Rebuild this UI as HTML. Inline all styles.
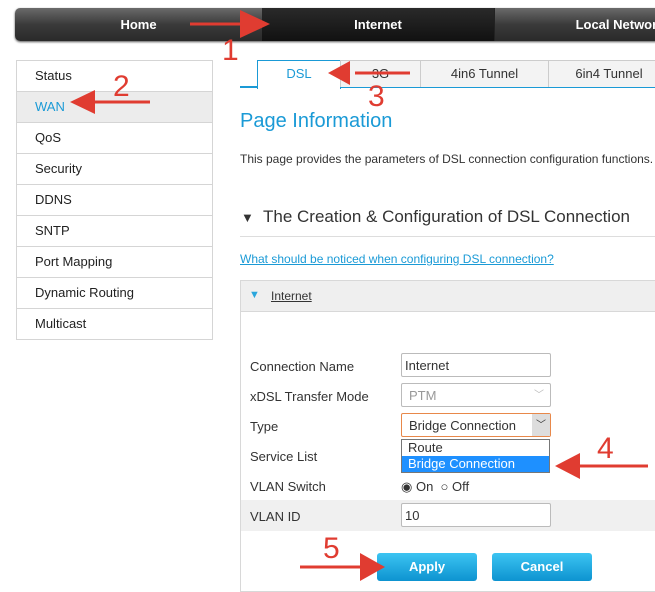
<!DOCTYPE html><html><head><style>
body{margin:0;width:655px;height:585px;overflow:hidden;background:#fff;font-family:"Liberation Sans",sans-serif;font-size:13px;color:#333;position:relative}
.a{position:absolute}
.nav{left:15px;top:8px;width:700px;height:33px;border-radius:5px;background:linear-gradient(#6a6a6a,#3a3a3a 50%,#2a2a2a);box-shadow:0 1px 2px #555;overflow:hidden}
.nav div{position:absolute;top:0;height:33px;line-height:33px;color:#fff;font-weight:bold;text-align:center;font-size:13px}
.side{left:16px;top:60px;width:195px;border:1px solid #d5d5d5}
.side div{height:30px;line-height:30px;padding-left:18px;border-bottom:1px solid #d5d5d5;font-size:13px;color:#222}
.side div:last-child{border-bottom:none}
.tab{top:60px;height:26px;line-height:26px;text-align:center;border:1px solid #ccc;background:#f3f3f3;font-size:13px;border-bottom:none}
.lbl{left:250px;font-size:13px;color:#333}
.inp{left:401px;height:24px;border:1px solid #bbb;border-radius:2px;line-height:24px;padding-left:3px;box-sizing:border-box;width:150px;background:#fff}
.btn{top:553px;width:100px;height:28px;line-height:28px;color:#fff;text-align:center;font-weight:bold;border-radius:3px;background:linear-gradient(#3cc4f2,#0d93d0)}
</style></head><body>
<div class="a nav">
<div style="left:0;width:247px">Home</div>
<div style="left:247px;width:232px;background:linear-gradient(#2a2a2a,#111);">Internet</div>
<div style="left:479px;width:250px;border-left:1px solid #222">Local Network</div>
</div>
<div class="a side">
<div>Status</div><div style="background:#ececec;color:#1a9ad6">WAN</div><div>QoS</div><div>Security</div><div>DDNS</div><div>SNTP</div><div>Port Mapping</div><div>Dynamic Routing</div><div>Multicast</div>
</div>
<div class="a" style="left:240px;top:86px;width:420px;height:2px;background:#1a9ad6"></div>
<div class="a tab" style="left:257px;width:82px;background:#fff;border-color:#1a9ad6;height:28px;color:#1a9ad6">DSL</div>
<div class="a tab" style="left:340px;width:79px">3G</div>
<div class="a tab" style="left:420px;width:127px">4in6 Tunnel</div>
<div class="a tab" style="left:548px;width:120px">6in4 Tunnel</div>
<div class="a" style="left:240px;top:110px;font-size:20px;color:#1a9ad6">Page Information</div>
<div class="a" style="left:240px;top:152px;font-size:12px;white-space:nowrap">This page provides the parameters of DSL connection configuration functions.</div>
<div class="a" style="left:241px;top:207px;font-size:17px;color:#333;white-space:nowrap"><span style="font-size:13px">▼</span>&nbsp; The Creation &amp; Configuration of DSL Connection</div>
<div class="a" style="left:240px;top:236px;width:420px;height:1px;background:#ddd"></div>
<div class="a" style="left:240px;top:252px;font-size:12px;color:#1a9ad6;text-decoration:underline">What should be noticed when configuring DSL connection?</div>
<div class="a" style="left:240px;top:280px;width:430px;height:310px;border:1px solid #d8d8d8"></div>
<div class="a" style="left:241px;top:281px;width:430px;height:30px;background:#efefef;border-bottom:1px solid #d8d8d8"></div>
<div class="a" style="left:249px;top:289px;font-size:11px;color:#2aa6dc">▼</div>
<div class="a" style="left:271px;top:289px;font-size:12px;text-decoration:underline">Internet</div>
<div class="a" style="left:241px;top:500px;width:430px;height:31px;background:#f0f0f0"></div>
<div class="a lbl" style="top:359px">Connection Name</div>
<div class="a lbl" style="top:389px">xDSL Transfer Mode</div>
<div class="a lbl" style="top:419px">Type</div>
<div class="a lbl" style="top:449px">Service List</div>
<div class="a lbl" style="top:479px">VLAN Switch</div>
<div class="a lbl" style="top:509px">VLAN ID</div>
<div class="a inp" style="top:353px">Internet</div>
<div class="a inp" style="top:383px;color:#999;padding-left:7px">PTM<span style="position:absolute;right:6px;color:#bbb;font-size:10px">﹀</span></div>
<div class="a inp" style="top:413px;border-color:#e8884a;padding-left:7px">Bridge Connection<span style="position:absolute;right:0;top:0;width:18px;height:22px;background:#ddd;text-align:center;font-size:10px">﹀</span></div>
<div class="a" style="left:401px;top:439px;width:149px;height:34px;border:1px solid #777;background:#fff;box-sizing:border-box">
<div style="height:16px;line-height:16px;padding-left:6px">Route</div>
<div style="height:16px;line-height:16px;padding-left:6px;background:#1e90ff;color:#fff">Bridge Connection</div></div>
<div class="a" style="left:401px;top:479px;font-size:13px">◉ On &nbsp;○ Off</div>
<div class="a inp" style="top:503px">10</div>
<div class="a btn" style="left:377px">Apply</div>
<div class="a btn" style="left:492px">Cancel</div>
<svg class="a" style="left:0;top:0" width="655" height="585">
<g stroke="#e03c31" stroke-width="3" fill="#e03c31" font-family="Liberation Sans" font-size="30">
<line x1="190" y1="24" x2="250" y2="24"/><polygon points="240,10 270,24 240,38" stroke="none"/>
<line x1="82" y1="102" x2="150" y2="102"/><polygon points="95,90 70,102 95,114" stroke="none"/>
<line x1="355" y1="73" x2="410" y2="73"/><polygon points="350,61 328,73 350,85" stroke="none"/>
<line x1="578" y1="466" x2="648" y2="466"/><polygon points="580,453 555,466 580,479" stroke="none"/>
<line x1="300" y1="567" x2="365" y2="567"/><polygon points="360,553 385,567 360,581" stroke="none"/>
<text x="222" y="60" stroke="none">1</text><text x="113" y="96" stroke="none">2</text><text x="368" y="106" stroke="none">3</text><text x="597" y="458" stroke="none">4</text><text x="323" y="558" stroke="none">5</text>
</g></svg>
</body></html>
